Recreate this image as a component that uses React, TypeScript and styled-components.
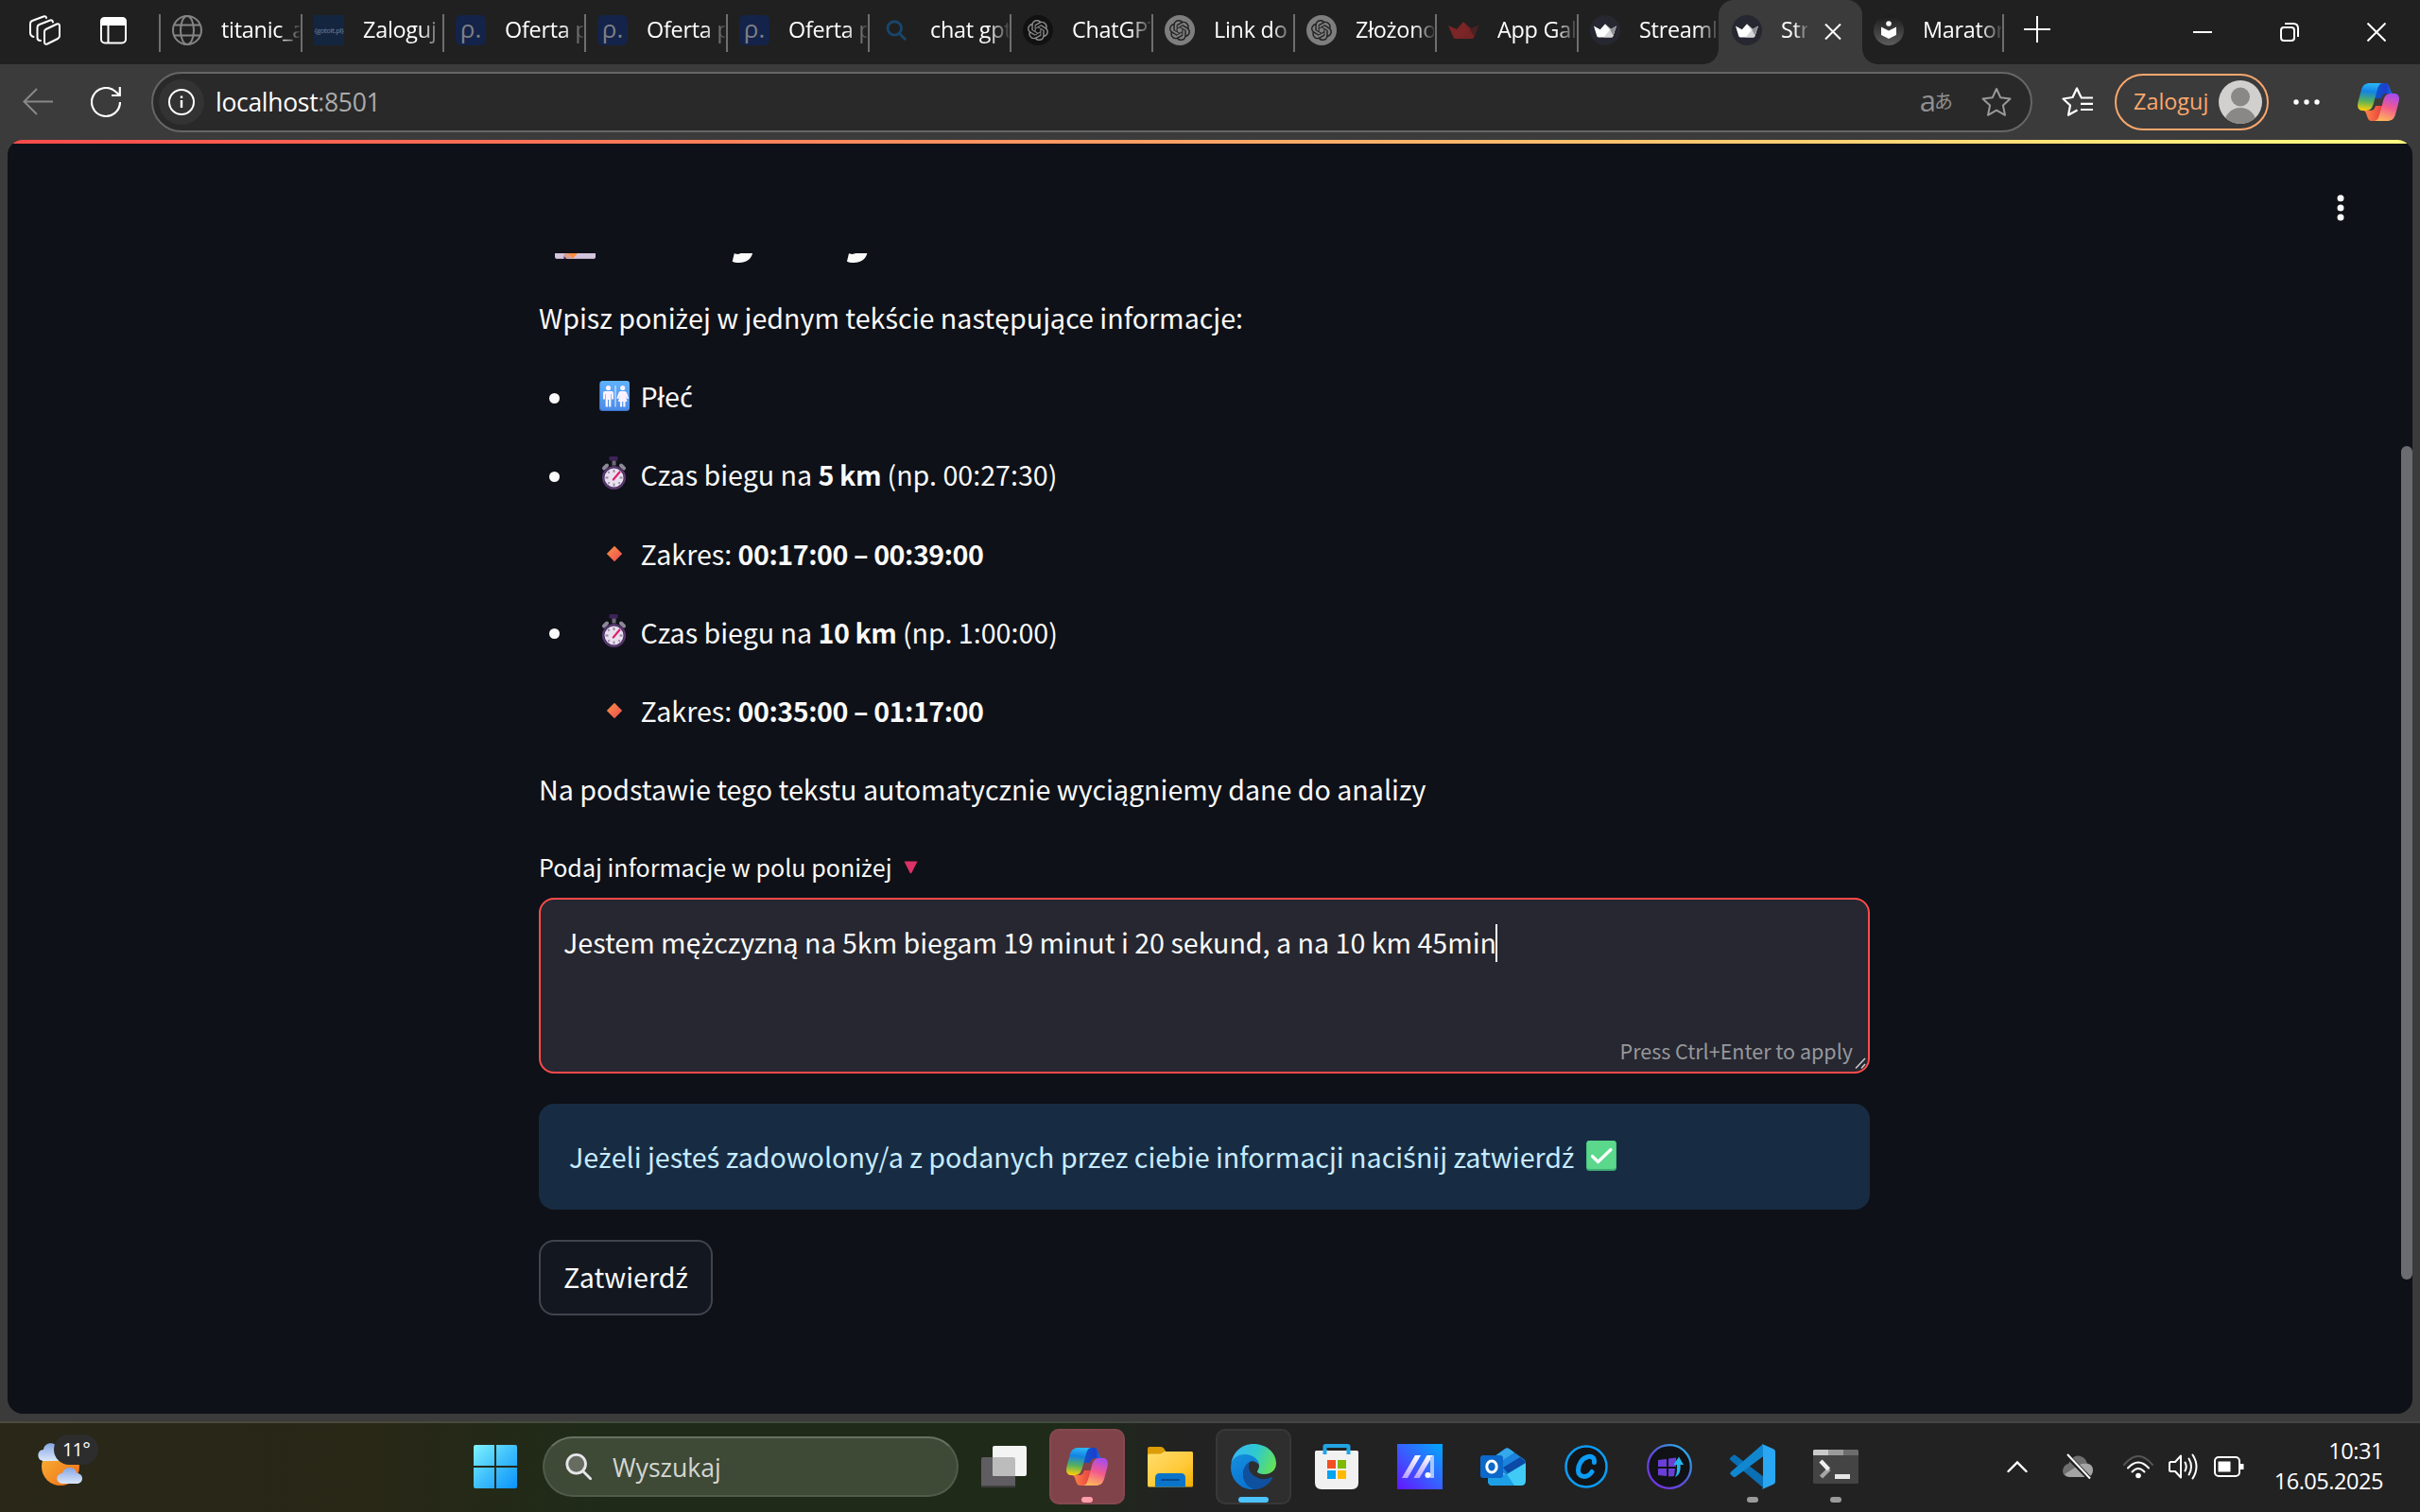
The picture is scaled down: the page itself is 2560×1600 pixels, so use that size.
import React from "react";
import styled, { createGlobalStyle, css } from "styled-components";
import { SiOpenai } from "react-icons/si";

const UI = '"Open Sans", "Noto Sans", "Noto Sans CJK JP", sans-serif';
const BODY = '"Noto Sans CJK SC", "Noto Sans", sans-serif';

const Global = createGlobalStyle`
  * { box-sizing: border-box; }
  html, body { margin: 0; padding: 0; background: #3b3b3b; }
  svg { display: block; flex: none; }
`;

const Screen = styled.div`
  display: flex;
  flex-direction: column;
  width: 2560px;
  height: 1600px;
  overflow: hidden;
  background: #3b3b3b;
  font-family: ${UI};
  color: #fff;
`;

/* ---------- tab strip ---------- */

const TabStrip = styled.header`
  display: flex;
  height: 68px;
  background: #202020;
`;

const StripTools = styled.div`
  display: flex;
  align-items: center;
  gap: 42px;
  width: 168px;
  height: 64px;
  padding-left: 31px;
`;

const Tab = styled.div<{ $active?: boolean; $divider?: boolean }>`
  position: relative;
  display: flex;
  align-items: flex-start;
  gap: 20px;
  width: 150px;
  height: 68px;
  padding: 16px 0 0 14px;
  ${(p) =>
    p.$active &&
    css`
      width: 152px;
      margin-right: -2px;
      border-radius: 16px 16px 0 0;
      background: #3b3b3b;
      &::before, &::after {
        content: "";
        position: absolute;
        bottom: 0;
        width: 16px;
        height: 16px;
      }
      &::before { left: -16px; background: radial-gradient(circle at 0 0, transparent 15.5px, #3b3b3b 16px); }
      &::after { right: -16px; background: radial-gradient(circle at 100% 0, transparent 15.5px, #3b3b3b 16px); }
    `}
  ${(p) =>
    p.$divider &&
    css`
      background: linear-gradient(#6e6e6e, #6e6e6e) 0 15px / 2px 40px no-repeat;
    `}
`;

const TabTitle = styled.span<{ $w: number; $fade: number }>`
  width: ${(p) => p.$w}px;
  height: 38px;
  margin-top: -4px;
  overflow: hidden;
  white-space: nowrap;
  font-size: 23.4px;
  line-height: 38px;
  letter-spacing: -0.25px;
  mask-image: linear-gradient(90deg, #000 ${(p) => p.$w - p.$fade}px, transparent ${(p) => p.$w + 3}px);
`;

const CloseIcon = styled.svg`
  margin: 9px 0 0 -2px;
`;

const Favicon = styled.div<{ $bg?: string; $round?: string; $fg?: string }>`
  display: flex;
  align-items: center;
  justify-content: center;
  flex: none;
  width: 32px;
  height: 32px;
  border-radius: ${(p) => p.$round ?? "0"};
  background: ${(p) => p.$bg ?? "transparent"};
  color: ${(p) => p.$fg ?? "#fff"};
`;

const RhoLetter = styled.span`
  font: 26px/28px ${UI};
  padding-bottom: 5px;
`;

const TinyLogo = styled.span`
  font: 600 7.6px/10px ${UI};
  letter-spacing: -0.5px;
`;

const StripEnd = styled.div`
  display: flex;
  flex: 1;
  background: linear-gradient(#6e6e6e, #6e6e6e) 0 15px / 2px 40px no-repeat;
`;

const NewTab = styled.div`
  padding: 17px 0 0 22px;
  flex: 1;
`;

const WindowButtons = styled.div`
  display: flex;
  gap: 72px;
  padding: 24px 36px 0 0;
`;

/* ---------- toolbar ---------- */

const Toolbar = styled.div`
  display: flex;
  align-items: center;
  height: 80px;
  padding-left: 24px;
`;

const NavButtons = styled.div`
  display: flex;
  gap: 40px;
  width: 136px;
`;

const AddressBar = styled.div`
  display: flex;
  align-items: center;
  width: 1990px;
  height: 64px;
  padding: 0 20px 0 6px;
  border: 2px solid #666;
  border-radius: 32px;
  background: #292929;
`;

const InfoBadge = styled.div`
  display: flex;
  align-items: center;
  justify-content: center;
  width: 48px;
  height: 48px;
  border-radius: 50%;
  background: #333;
`;

const Url = styled.div`
  flex: 1;
  padding-left: 12px;
  font-size: 26.5px;
  line-height: 36px;
  letter-spacing: -0.3px;
  span { color: #ababab; }
`;

const Translate = styled.span`
  display: flex;
  align-items: center;
  margin-right: 30px;
  color: #8f8f8f;
  font-size: 31px;
  line-height: 40px;
  padding-bottom: 4px;
  small { margin-left: -2px; padding-top: 1px; font-size: 20px; line-height: 40px; font-family: "Noto Sans CJK JP", sans-serif; }
`;

const SideTools = styled.div`
  display: flex;
  align-items: center;
  padding-left: 31px;
`;

const SignIn = styled.div`
  display: flex;
  align-items: center;
  justify-content: space-between;
  width: 163px;
  height: 60px;
  margin: 0 26px 0 23px;
  padding: 0 5px 0 18px;
  border: 2px solid #f9a86e;
  border-radius: 30px;
  color: #f9a86e;
  font-size: 23.4px;
  span { padding-bottom: 2px; }
`;

const Spacer = styled.div<{ $w: number }>`
  flex: none;
  width: ${(p) => p.$w}px;
`;

/* ---------- page ---------- */

const PageFrame = styled.div`
  display: flex;
  height: 1356px;
  padding: 0 8px 8px;
`;

const Page = styled.main`
  position: relative;
  display: flex;
  flex-direction: column;
  flex: 1;
  overflow: hidden;
  border-radius: 16px;
  background: #0e1117;
  color: #fafafa;
  font-family: ${BODY};
`;

const Decoration = styled.div`
  flex: none;
  height: 4px;
  background: linear-gradient(90deg, #ff4b4b, #fffd80);
`;

const PageHeader = styled.div`
  display: flex;
  flex: none;
  justify-content: flex-end;
  height: 116px;
  padding: 52px 72px 0 0;
`;

const ScrollArea = styled.div`
  flex: 1;
  overflow: hidden;
  padding-left: 562px;
`;

const ScrollThumb = styled.div`
  position: absolute;
  top: 324px;
  right: 0;
  width: 12px;
  height: 882px;
  border-radius: 6px;
  background: #6b6c70;
`;

const Column = styled.div`
  display: flex;
  flex-direction: column;
  width: 1408px;
`;

const Title = styled.h1`
  display: flex;
  align-items: flex-end;
  height: 42px;
  margin: 0;
  padding: 0 0 36px 17px;
  font-size: 78.8px;
  line-height: 110px;
`;

const TitleGlyph = styled.span<{ $gap: number }>`
  margin-left: ${(p) => p.$gap}px;
  margin-bottom: -7px;
`;

const Row = styled.div`
  display: flex;
  align-items: center;
  height: 51.2px;
  margin-bottom: 32px;
  font-size: 28.64px;
  line-height: 51.2px;
  white-space: pre;
  b { letter-spacing: -0.45px; }
`;

const Bullet = styled.span<{ $hidden?: boolean }>`
  width: 11px;
  height: 11px;
  margin: 5px 42px 0 11px;
  border-radius: 50%;
  background: ${(p) => (p.$hidden ? "transparent" : "#fafafa")};
`;

const EmojiSlot = styled.span`
  display: flex;
  justify-content: center;
  width: 32px;
  margin: 1px 12px 0 -0.5px;
`;

const Label = styled.label`
  display: flex;
  align-items: center;
  gap: 12px;
  height: 40px;
  margin: 5px 0 13px;
  font-size: 25.06px;
  line-height: 40px;
  svg { margin-top: 2px; }
`;

const TextField = styled.div`
  position: relative;
  display: flex;
  align-items: flex-start;
  height: 186px;
  padding: 19px 24px;
  border: 2px solid #ff4b4b;
  border-radius: 16px;
  background: #262730;
  font-size: 28.64px;
  line-height: 51.2px;
`;

const Caret = styled.span`
  width: 2px;
  height: 40px;
  margin: 7px 0 0 -1px;
  background: #fff;
`;

const FieldHint = styled.span`
  position: absolute;
  right: 16px;
  bottom: 4px;
  color: #97989d;
  font-size: 21.5px;
  line-height: 36px;
`;

const ResizeGrip = styled.svg`
  position: absolute;
  right: 1px;
  bottom: 2px;
`;

const Alert = styled.div`
  display: flex;
  align-items: center;
  gap: 12px;
  height: 112px;
  margin-top: 32px;
  padding: 0 32px 2px;
  border-radius: 16px;
  background: #172c43;
  color: #c7ebff;
  font-size: 28.64px;
`;

const Submit = styled.button`
  width: 184px;
  height: 80px;
  margin-top: 32px;
  padding: 0 0 2px;
  border: 2px solid #41444c;
  border-radius: 16px;
  background: #131720;
  color: #fafafa;
  font: 28.64px/48px ${BODY};
`;

const Accent = styled.span`
  font-family: "Noto Sans", sans-serif;
`;

/** Polish letters with marks above that the body face lacks are set in the fallback face. */
function Pl({ children }: { children: string }) {
  return (
    <span>
      {children.split(/([żźśćńŻŹŚĆŃ]+)/).map((part, i) => (i % 2 ? <Accent key={i}>{part}</Accent> : part))}
    </span>
  );
}

/* ---------- taskbar ---------- */

const Taskbar = styled.footer`
  display: flex;
  align-items: center;
  height: 96px;
  border-top: 2px solid rgba(255, 255, 255, 0.16);
  padding-bottom: 2px;
  background: linear-gradient(90deg, #2a2718 0, #282817 420px, #1f2b18 640px, #1f2b18 1120px, #222 1250px, #222 100%) border-box;
`;

const Weather = styled.div`
  position: relative;
  width: 64px;
  height: 76px;
  margin: 0 397px 0 40px;
`;

const Temperature = styled.span`
  position: absolute;
  top: 4px;
  left: 17px;
  width: 47px;
  height: 32px;
  border-radius: 16px;
  background: #2d2d2d;
  font-size: 20px;
  line-height: 32px;
  letter-spacing: -0.8px;
  text-align: center;
`;

const Search = styled.div`
  display: flex;
  align-items: center;
  gap: 21px;
  width: 440px;
  height: 64px;
  margin: 0 8px 0 27px;
  padding-left: 21px;
  border: 2px solid rgba(255, 255, 255, 0.1);
  border-top-color: rgba(255, 255, 255, 0.22);
  border-radius: 32px;
  background: #3e4936;
  color: #d3d6d1;
  font-size: 26.6px;
  line-height: 36px;
  span { padding-top: 2px; }
`;

const Apps = styled.div`
  display: flex;
  gap: 8px;
`;

const App_ = styled.div<{ $tile?: string; $edge?: string }>`
  position: relative;
  display: flex;
  align-items: center;
  justify-content: center;
  width: 80px;
  height: 80px;
  border: 2px solid ${(p) => p.$edge ?? "transparent"};
  border-radius: 10px;
  background: ${(p) => p.$tile ?? "transparent"};
`;

const Running = styled.i<{ $w: number; $c: string }>`
  position: absolute;
  bottom: 0;
  left: ${(p) => 38 - p.$w / 2}px;
  width: ${(p) => p.$w}px;
  height: 6px;
  border-radius: 3px;
  background: ${(p) => p.$c};
`;

const Tray = styled.div`
  display: flex;
  align-items: center;
  flex: 1;
  justify-content: flex-end;
  padding-right: 39px;
`;

const Clock = styled.div`
  width: 147px;
  padding-bottom: 2px;
  text-align: right;
  font-size: 23.6px;
  line-height: 32px;
  letter-spacing: -0.5px;
`;

/* ---------- drawings ---------- */

const Crown = ({ a, b, c }: { a: string; b: string; c: string }) => (
  <svg width="32" height="32" viewBox="0 0 32 32">
    <path d="M0 11l9 4 7-8 7 8 9-4-5 12.500q-.5 1.500-2 1.500H8q-2 0-2.500-1.500z" fill={a} />
    <path d="M16 7l7 8-9 10h11q1.500 0 2-1.500l2-5z" fill={b} />
    <path d="M32 11l-9 4 4 7z" fill={c} />
  </svg>
);

const CopilotLogo = ({ id }: { id: string }) => (
  <svg width="44" height="40" viewBox="0 0 44 40">
    <defs>
      <linearGradient id={id + "a"} x1=".4" y1="0" x2=".3" y2="1">
        <stop offset="0" stopColor="#2bb4f5" /><stop offset=".3" stopColor="#1284e4" />
        <stop offset=".65" stopColor="#57b05c" /><stop offset="1" stopColor="#fdd108" />
      </linearGradient>
      <linearGradient id={id + "b"} x1=".7" y1="0" x2=".4" y2="1">
        <stop offset="0" stopColor="#a64bf0" /><stop offset=".5" stopColor="#f25a8e" /><stop offset="1" stopColor="#ffb55b" />
      </linearGradient>
      <linearGradient id={id + "c"} x1="0" y1="0" x2="1" y2="0">
        <stop offset="0" stopColor="#0f56c8" /><stop offset=".6" stopColor="#1b3fd0" /><stop offset="1" stopColor="#2385ee" />
      </linearGradient>
      <linearGradient id={id + "d"} x1="0" y1="0" x2="1" y2="0">
        <stop offset="0" stopColor="#ff8e4a" /><stop offset="1" stopColor="#e8403f" />
      </linearGradient>
    </defs>
    <path d="M24 0h5c3 0 4 2 5 5l1 3c.7 2 1.500 3 4 3h-8c-4 0-5 2-6 5h-7l3-12z" fill={`url(#${id}c)`} />
    <path d="M20 40h-5c-3 0-4-2-5-5l-1-3c-.7-2-1.500-3-4-3h8c4 0 5-2 6-5h7l-3 12z" fill={`url(#${id}d)`} />
    <path d="M13 0h14c-4 0-5 3-6.500 8L17 21c-1.500 5-3 8-8 8H6c-6 0-7-4-5-11L4 7c1.500-5 4-7 9-7z" fill={`url(#${id}a)`} />
    <path d="M31 40H17c4 0 5-3 6.500-8L27 19c1.500-5 3-8 8-8h3c6 0 7 4 5 11l-3 11c-1.500 5-4 7-9 7z" fill={`url(#${id}b)`} />
  </svg>
);

const Stopwatch = () => (
  <svg width="27" height="40" viewBox="0 0 27 40">
    <rect x="8.500" y="1" width="9" height="4.500" rx="1.200" fill="#3d2358" />
    <path d="M11.500 5.500h4v5h-4z" fill="#6e6a78" />
    <path d="M3 13.500l3-3M24 13.500l-3-3" stroke="#8e8a98" strokeWidth="4" strokeLinecap="round" />
    <circle cx="13.500" cy="23.500" r="12.600" fill="#43305f" />
    <circle cx="13.500" cy="23.500" r="11.600" fill="none" stroke="#6b3b77" strokeWidth="1" />
    <circle cx="13.500" cy="23.500" r="10" fill="#e9e0ef" />
    <path d="M13.500 15v3M13.500 29.500v3M4.500 23.500h3M19.500 23.500h3M7.200 17.200l1.500 1.500M18.300 28.300l1.500 1.500M7.200 29.800l1.500-1.500" stroke="#96889f" strokeWidth="1.800" />
    <path d="M12.800 25.500L19.500 17.500" stroke="#e0206a" strokeWidth="2.200" strokeLinecap="round" />
  </svg>
);

const Restroom = () => (
  <svg width="32" height="32" viewBox="0 0 32 32">
    <defs><linearGradient id="wc" x1="0" y1="0" x2="0" y2="1"><stop stopColor="#5fb2ff" /><stop offset="1" stopColor="#4a8be8" /></linearGradient></defs>
    <rect width="32" height="32" rx="3.500" fill="#3c74cf" />
    <rect x="1" width="31" height="31" rx="3.200" fill="url(#wc)" />
    <g fill="#fbf2ff">
      <circle cx="9.500" cy="7.500" r="2.600" /><circle cx="24.700" cy="7.500" r="2.600" />
      <path d="M6 11h7q2 0 2 2v6.500h-2V14h-.6v13.500h-2.300V20H9v7.500H6.600V14H6v5.500H4V13q0-2 2-2z" />
      <path d="M22 11h5.400l1.600 1.500 2 6-1.800.8-1.700-4 2 6.700h-2v5.500h-2.200V22h-1.200v5.500h-2.200V22h-2l2-6.700-1.700 4-1.800-.8 2-6z" />
    </g>
    <path d="M17 5v22.500" stroke="#fbf2ff" />
  </svg>
);

const Diamond = () => (
  <svg width="18" height="18" viewBox="0 0 18 18">
    <defs><linearGradient id="dm" x1="0" y1="0" x2="1" y2="1"><stop stopColor="#f99345" /><stop offset="1" stopColor="#ef4a52" /></linearGradient></defs>
    <path d="M9 .8L17.200 9 9 17.200.8 9z" fill="url(#dm)" />
  </svg>
);

const Triangle = () => (
  <svg width="15" height="14" viewBox="0 0 15 14">
    <path d="M.5.500h14L8.500 12.500q-1 1.500-2 0z" fill="#dc3265" />
  </svg>
);

const CheckMark = () => (
  <svg width="32" height="32" viewBox="0 0 32 32">
    <rect width="32" height="32" rx="3.500" fill="#3fae74" />
    <rect x=".5" width="31" height="30" rx="3" fill="#5bd88c" />
    <path d="M6.500 16.500l6 6L26 9.500" fill="none" stroke="#fff" strokeWidth="3.200" strokeLinecap="round" strokeLinejoin="round" />
  </svg>
);

const Memo = () => (
  <svg width="44" height="64" viewBox="0 0 44 64">
    <rect y="0" width="43" height="64" rx="2.500" fill="#d3c5dc" />
    <path d="M2 63.500h39" stroke="#b9aac4" strokeWidth="1" />
    <path d="M11 56h15L19 63.500z" fill="#ff8f3c" />
    <path d="M9 60l3-3 7 6.500h-7z" fill="#d9a08e" />
    <path d="M9.500 61l3 3h-3z" fill="#4a2a4c" />
  </svg>
);

const Magnifier = ({ size, color, width, fill = "none" }: { size: number; color: string; width: number; fill?: string }) => (
  <svg width={size} height={size} viewBox="0 0 32 32" fill="none" stroke={color} strokeWidth={width} strokeLinecap="round">
    <circle cx="13.500" cy="13" r="10.500" fill={fill} />
    <path d="M21 21l8.500 8.500" />
  </svg>
);

const EdgeLogo = () => (
  <svg width="48" height="48" viewBox="0 0 48 48">
    <defs>
      <linearGradient id="eg" x1="0" y1=".3" x2="1" y2=".6"><stop stopColor="#37b6f7" /><stop offset=".5" stopColor="#2fc9cf" /><stop offset="1" stopColor="#63e257" /></linearGradient>
      <linearGradient id="eb" x1="0" y1="0" x2=".5" y2="1"><stop stopColor="#1590de" /><stop offset="1" stopColor="#0873d2" /></linearGradient>
    </defs>
    <path d="M0 25C0 16 7 10 15 10c9 0 15 6 15 12-3-3.500-7-4.500-9-3.500C14 22 12 30 13.500 36c2 7 7.500 11.500 13.500 12C12 50 0 39 0 25z" fill="url(#eb)" />
    <path d="M21 18.500C14 22 12 30 13.500 36 15.500 43 21 48 27 48c8-1 14-6 17-11.500.5-1-.5-1.800-1.500-1.200-4 2-8 2.700-12.500 1.200-6-2-11-7-11-12 0-2.500.5-4.500 2-6z" fill="#0f519f" />
    <path d="M.3 21C2 8.500 12 0 24 0c14 0 24 9.500 24 20.500C48 28 42 32 36 32c-5 0-8-1.500-8-2.800S30 26.500 30 23c0-7-7-12-15-12C7 11 2 15.500.3 21z" fill="url(#eg)" />
  </svg>
);

const FolderLogo = () => (
  <svg width="48" height="43" viewBox="0 0 48 43">
    <defs><linearGradient id="fo" x1="0" y1="0" x2="1" y2="1"><stop stopColor="#ffdd6e" /><stop offset=".6" stopColor="#ffc937" /><stop offset="1" stopColor="#f2ae00" /></linearGradient></defs>
    <path d="M0 2q0-2 2-2h12q2 0 3 1.500L20 6v8H0z" fill="#dc9c05" />
    <path d="M0 9q0-1.500 1.500-1.500h12L18 5h28.500Q48 5 48 6.500V41q0 1.500-1.500 1.500h-45Q0 42.500 0 41z" fill="url(#fo)" />
    <path d="M8 42.500V33q0-5 5-5h22q5 0 5 5v9.500z" fill="#0a74ca" />
    <path d="M15 35h18" stroke="#0a4a8c" strokeWidth="2" strokeLinecap="round" />
  </svg>
);

const TaskViewLogo = () => (
  <svg width="48" height="44" viewBox="0 0 48 44">
    <rect x="0" y="12" width="36" height="32" rx="2" fill="#5f5d61" />
    <rect x="12" y="0" width="36" height="32" rx="2" fill="#f4f4f4" />
    <path d="M12 12h22q2 0 2 2v18H14q-2 0-2-2z" fill="#bcbcbc" />
    <path d="M0 42h36q0 2-2 2H2q-2 0-2-2z" fill="#3f3f3f" />
  </svg>
);

const StoreLogo = () => (
  <svg width="46" height="48" viewBox="0 0 46 48">
    <path d="M10.500 11V2.800Q10.500 2 11.300 2h23.400q.8 0 .8.800V11" fill="none" stroke="#22a4e4" strokeWidth="4" />
    <path d="M0 8.500Q0 7 1.500 7h43Q46 7 46 8.500V41q0 7-7 7H7q-7 0-7-7z" fill="#f1f1f1" />
    <path d="M10.500 6v5M35.500 6v5" stroke="#22a4e4" strokeWidth="4" />
    <path d="M13 17h9v9h-9z" fill="#f25022" /><path d="M24 17h9v9h-9z" fill="#7fba00" />
    <path d="M13 28h9v9h-9z" fill="#00a4ef" /><path d="M24 28h9v9h-9z" fill="#ffb900" />
  </svg>
);

const AsusLogo = () => (
  <svg width="48" height="48" viewBox="0 0 48 48">
    <defs>
      <linearGradient id="as" x1="0" y1="1" x2="1" y2="0"><stop stopColor="#6414ff" /><stop offset=".5" stopColor="#3760ff" /><stop offset="1" stopColor="#00a8ff" /></linearGradient>
      <linearGradient id="at" x1="0" y1="1" x2="0" y2="0"><stop stopColor="#b7a2ff" /><stop offset="1" stopColor="#fff" /></linearGradient>
    </defs>
    <path d="M0 0h48v48H0z" fill="url(#as)" />
    <path d="M5 36L19 12h6L11 36zM17.500 36l14-24H38L23.500 36z" fill="url(#at)" />
    <path d="M35 14l4-2v24h-4z" fill="#a8c6ff" />
    <circle cx="32.500" cy="33" r="3" fill="#fff" />
  </svg>
);

const OutlookLogo = () => (
  <svg width="48" height="40" viewBox="0 0 48 40">
    <path d="M8 14L26 1q2-1.500 4 0l16 11q2 1.500 2 4L30 28 8 24z" fill="#1c83dc" />
    <path d="M14 10L27 .8q1.500-.8 3 0L36 5 18 17z" fill="#35a9ec" />
    <path d="M24 21l18-11 4 3q2 1.500 2 4L30 28z" fill="#0b4aa6" />
    <path d="M8 20l20 8 20-12v19q0 5-5 5H13q-5 0-5-5z" fill="#3fcbf5" />
    <path d="M8 31l20-3 8 12H13q-5 0-5-5z" fill="#1d9fe8" />
    <rect y="8" width="24" height="24" rx="3" fill="#0c68c9" />
    <ellipse cx="12" cy="20" rx="5.200" ry="6" fill="none" stroke="#fff" strokeWidth="3" />
  </svg>
);

const CircleCLogo = () => (
  <svg width="46" height="46" viewBox="0 0 46 46" fill="none" stroke="#0c9cf5">
    <circle cx="23" cy="23" r="21.500" fill="#121417" strokeWidth="2.500" />
    <path d="M31.500 18.500C32 12.500 28 12 25 12.500 18 14 14.500 21 14.500 27c0 8 10 8.500 14.500 1.500" strokeWidth="5" strokeLinecap="round" />
  </svg>
);

const UpdateLogo = () => (
  <svg width="48" height="48" viewBox="0 0 48 48">
    <defs>
      <linearGradient id="up" x1="0" y1="1" x2="1" y2="0"><stop stopColor="#7b2bea" /><stop offset=".5" stopColor="#5a55d8" /><stop offset="1" stopColor="#1cc3ee" /></linearGradient>
    </defs>
    <circle cx="24" cy="24" r="22.800" fill="#111216" stroke="url(#up)" strokeWidth="2.200" />
    <path d="M12 17l9-1v8h-9zM23 15.500l8-1V24h-8zM12 26h9v8l-9-1zM23 26h7l-1 8-6 .5z" fill="#6a3fd8" />
    <path d="M30 35c5-2 6-7 5.500-13h3.500L34 13.500 28.500 22H32c0 6 0 10-2 13z" fill="#21b7ea" />
  </svg>
);

const CodeLogo = () => (
  <svg width="48" height="48" viewBox="0 0 48 48">
    <path d="M0 17.500q-.5-1.500 1-2.500l2.500-2q1-.8 2.500 0L36 36v12L1 18.500z" fill="#0a6fb4" transform="translate(0 -1)" />
    <path d="M35 0L1 29.500Q-.5 31 1 32.500l2.500 2.300q1 .8 2.500 0L36 12.500z" fill="#1187cf" />
    <path d="M34 0l12 5.300q2 1 2 3v31.400q0 2-2 3L34 48q1-1 1-3V3q0-2-1-3z" fill="#2aa7f2" />
  </svg>
);

const TerminalLogo = () => (
  <svg width="48" height="36" viewBox="0 0 48 36">
    <rect width="48" height="36" rx="1.500" fill="#444" />
    <path d="M1.500 0H16v6H0V1.500Q0 0 1.500 0z" fill="#cacaca" />
    <path d="M16 0h16v6H16z" fill="#9b9b9b" /><path d="M32 0h14.500Q48 0 48 1.500V6H32z" fill="#6c6c6c" />
    <path d="M8.500 29L17 20.500" stroke="#a5a5a5" strokeWidth="4.500" />
    <path d="M8 12l8.500 9" stroke="#efefef" strokeWidth="4.500" />
    <path d="M23 26h16v5H23z" fill="#e6e6e6" />
  </svg>
);

const WeatherArt = () => (
  <svg width="50" height="76" viewBox="0 0 50 76">
    <defs>
      <linearGradient id="su" x1="0" y1="0" x2="1" y2="1"><stop stopColor="#f6b93a" /><stop offset="1" stopColor="#f26a14" /></linearGradient>
      <linearGradient id="cl" x1="0" y1="0" x2="0" y2="1"><stop stopColor="#86a6e4" /><stop offset="1" stopColor="#dbe7fb" /></linearGradient>
    </defs>
    <circle cx="24" cy="38" r="20" fill="url(#su)" />
    <path d="M6 32c-8-1-7-12 0-12 1-9 14-9 16 0 7 1 7 12 0 12z" fill="url(#cl)" />
    <path d="M26 56c-8-1-7-11 0-11 2-8 14-8 15 0 8 0 8 11 0 11z" fill="url(#cl)" />
  </svg>
);

const Star = ({ color }: { color: string }) => (
  <svg width="32" height="32" viewBox="0 0 32 32" fill="none" stroke={color} strokeWidth="2" strokeLinejoin="round">
    <path d="M16 2l4.300 9.300 10.200 1.200-7.600 6.900 2.100 10.400L16 24.700l-9 5.100 2.100-10.400-7.600-6.900 10.200-1.200z" />
  </svg>
);

/* ---------- data ---------- */

const rho = <Favicon $bg="#14234a" $round="6px" $fg="#7e8086"><RhoLetter>ρ.</RhoLetter></Favicon>;
const gpt = (bg: string, fg: string) => <Favicon $bg={bg} $round="50%" $fg={fg}><SiOpenai size={22} /></Favicon>;
const streamlit = <Favicon $bg="#262730" $round="50%"><svg width="24" height="24" viewBox="0 0 32 32">
  <path d="M0 10l9 5 7-8 7 8 9-5-5 14.500q-.5 1.500-2 1.500H7q-2 0-2.500-1.500z" fill="#fff" />
  <path d="M16 7l7 8-9 11h11q1.500 0 2-1.500l2-6z" fill="#d6d6d8" />
  <path d="M32 10l-9 5 4 8z" fill="#8c8d92" />
</svg></Favicon>;

const tabs: { title: string; icon: React.ReactNode; active?: boolean; divider?: boolean }[] = [
  {
    title: "titanic_a",
    divider: true,
    icon: (
      <svg width="32" height="32" viewBox="0 0 32 32" fill="none" stroke="#858585" strokeWidth="2">
        <circle cx="16" cy="16" r="15" /><ellipse cx="16" cy="16" rx="7" ry="15" /><path d="M2.500 10.500h27M2.500 21.500h27" />
      </svg>
    ),
  },
  { title: "Zaloguj", divider: true, icon: <Favicon $bg="#14253f" $fg="#5d6c84"><TinyLogo>{"{gotoit.pl}"}</TinyLogo></Favicon> },
  { title: "Oferta p", divider: true, icon: rho },
  { title: "Oferta p", divider: true, icon: rho },
  { title: "Oferta p", divider: true, icon: rho },
  { title: "chat gpt", divider: true, icon: <Favicon><Magnifier size={22} color="#19456b" width={4.2} /></Favicon> },
  { title: "ChatGPT", divider: true, icon: gpt("#111", "#8a8a8a") },
  { title: "Link do", divider: true, icon: gpt("#7e7e7e", "#222") },
  { title: "Złożono", divider: true, icon: gpt("#7e7e7e", "#222") },
  { title: "App Gal", divider: true, icon: <Crown a="#7b2527" b="#752325" c="#4a2122" /> },
  { title: "Streamli", divider: true, icon: streamlit },
  { title: "Str", active: true, icon: streamlit },
  {
    title: "Marator",
    icon: (
      <Favicon $bg="linear-gradient(#1b1b1b,#5c5c5c)" $round="50%">
        <svg width="32" height="32" viewBox="0 0 32 32" fill="#fff">
          <circle cx="16" cy="9" r="2.800" /><path d="M8 12.500l8 4 8-4v8.500L16 25l-8-4z" />
        </svg>
      </Favicon>
    ),
  },
];

export default function App() {
  return (
    <Screen>
      <Global />
      <TabStrip>
        <StripTools>
          <svg width="33" height="32" viewBox="0 0 33 32" fill="none" stroke="#fff" strokeWidth="2" strokeLinejoin="round" strokeLinecap="round">
            <path d="M17.500 15l11.500-5.500q3-1 3 2V22q0 2-2 3l-11 5.500q-3 1-3-2V17.500q0-1.700 1.500-2.500z" />
            <path d="M12 27q-3.500 0-3.500-3V13q0-2 2-3L22 5.500q2.500-.8 3 2M4.500 23Q1 22 1 19V9q0-2 2-3l12-4.500q2.500-.8 3 1.500" />
          </svg>
          <svg width="28" height="29" viewBox="0 0 28 29" fill="none" stroke="#fff" strokeWidth="2">
            <rect x="1" y="1.500" width="26" height="26" rx="4" /><path d="M1 8V5q0-4 4-4h18q4 0 4 4v3z" fill="#fff" /><path d="M8.500 8v19" />
          </svg>
        </StripTools>
        {tabs.map((t, i) => (
          <Tab key={i} $active={t.active} $divider={t.divider}>
            {t.icon}
            <TabTitle $w={t.active ? 28 : 83} $fade={t.active ? 14 : 22}>{t.title}</TabTitle>
            {t.active && (
              <CloseIcon width="18" height="17" viewBox="0 0 18 17" stroke="#fff" strokeWidth="2">
                <path d="M1 .5l16 16M17 .5l-16 16" />
              </CloseIcon>
            )}
          </Tab>
        ))}
        <StripEnd>
          <NewTab>
            <svg width="30" height="28" viewBox="0 0 30 28" stroke="#fff" strokeWidth="2"><path d="M1 14h28M15 0v28" /></svg>
          </NewTab>
          <WindowButtons>
            <svg width="20" height="20" viewBox="0 0 20 20" stroke="#fff" strokeWidth="2"><path d="M0 10h20" /></svg>
            <svg width="20" height="20" viewBox="0 0 20 20" fill="none" stroke="#fff" strokeWidth="2">
              <rect x="1" y="5" width="14" height="14" rx="3" /><path d="M5 1h9q5 0 5 5v9" />
            </svg>
            <svg width="20" height="20" viewBox="0 0 20 20" stroke="#fff" strokeWidth="2"><path d="M.5.500l19 19M19.500.500l-19 19" /></svg>
          </WindowButtons>
        </StripEnd>
      </TabStrip>

      <Toolbar>
        <NavButtons>
          <svg width="32" height="32" viewBox="0 0 32 32" fill="none" stroke="#888" strokeWidth="2"><path d="M15 2L1.500 15.500 15 29M1.500 15.500H32" /></svg>
          <svg width="32" height="32" viewBox="0 0 32 32" fill="none" stroke="#fff" strokeWidth="2.200"><path d="M31 16a15 15 0 1 1-5-11.200l4.500 4M30.800 0v9H22" /></svg>
        </NavButtons>
        <AddressBar>
          <InfoBadge>
            <svg width="30" height="30" viewBox="0 0 30 30" fill="none" stroke="#fff" strokeWidth="2"><circle cx="15" cy="15" r="13" /><path d="M15 13v8M15 8.500v2.500" strokeWidth="2.400" /></svg>
          </InfoBadge>
          <Url>localhost<span>:8501</span></Url>
          <Translate>a<small>あ</small></Translate>
          <Star color="#999" />
        </AddressBar>
        <SideTools>
          <svg width="33" height="32" viewBox="0 0 33 32" fill="none" stroke="#fff" strokeWidth="2.200" strokeLinejoin="round">
            <path d="M20.500 11L16 1.500 11.500 11 1.500 12.500l7.500 7L7 29.800l9.500-5.300M20 11.500h13M20 17.800h13M20 24h13" />
          </svg>
          <SignIn>
            <span>Zaloguj</span>
            <svg width="46" height="46" viewBox="0 0 46 46">
              <defs><clipPath id="av"><circle cx="23" cy="23" r="23" /></clipPath></defs>
              <g clipPath="url(#av)">
                <path d="M0 0h46v46H0z" fill="#d2d0ce" /><circle cx="23" cy="17.500" r="10" fill="#8a8886" /><circle cx="23" cy="46" r="17" fill="#8a8886" />
              </g>
            </svg>
          </SignIn>
          <svg width="28" height="8" viewBox="0 0 28 8" fill="#fff"><circle cx="3" cy="4" r="2.700" /><circle cx="14" cy="4" r="2.700" /><circle cx="25" cy="4" r="2.700" /></svg>
          <Spacer $w={40} />
          <CopilotLogo id="ca" />
        </SideTools>
      </Toolbar>

      <PageFrame>
        <Page>
          <Decoration />
          <PageHeader>
            <svg width="8" height="32" viewBox="0 0 8 32" fill="#fafafa"><circle cx="4" cy="5.800" r="3.500" /><circle cx="4" cy="15.900" r="3.500" /><circle cx="4" cy="26" r="3.500" /></svg>
          </PageHeader>
          <ScrollArea>
            <Column>
              <Title>
                <Memo />
                <TitleGlyph $gap={148}>j</TitleGlyph>
                <TitleGlyph $gap={97}>j</TitleGlyph>
              </Title>
              <Row><Pl>Wpisz poniżej w jednym tekście następujące informacje:</Pl></Row>
              <Row><Bullet /><EmojiSlot><Restroom /></EmojiSlot><Pl>Płeć</Pl></Row>
              <Row><Bullet /><EmojiSlot><Stopwatch /></EmojiSlot>Czas biegu na <b>5 km</b> (np. 00:27:30)</Row>
              <Row><Bullet $hidden /><EmojiSlot><Diamond /></EmojiSlot>Zakres: <b>00:17:00 – 00:39:00</b></Row>
              <Row><Bullet /><EmojiSlot><Stopwatch /></EmojiSlot>Czas biegu na <b>10 km</b> (np. 1:00:00)</Row>
              <Row><Bullet $hidden /><EmojiSlot><Diamond /></EmojiSlot>Zakres: <b>00:35:00 – 01:17:00</b></Row>
              <Row><Pl>Na podstawie tego tekstu automatycznie wyciągniemy dane do analizy</Pl></Row>
              <Label><Pl>Podaj informacje w polu poniżej</Pl><Triangle /></Label>
              <TextField>
                <Pl>Jestem mężczyzną na 5km biegam 19 minut i 20 sekund, a na 10 km 45min</Pl>
                <Caret />
                <FieldHint>Press Ctrl+Enter to apply</FieldHint>
                <ResizeGrip width="14" height="14" viewBox="0 0 14 14" stroke="#c9c9cc" strokeWidth="1.600">
                  <path d="M2 12.500L12 2M8 12.500l4-4.500" />
                </ResizeGrip>
              </TextField>
              <Alert><Pl>Jeżeli jesteś zadowolony/a z podanych przez ciebie informacji naciśnij zatwierdź</Pl><CheckMark /></Alert>
              <Submit><Pl>Zatwierdź</Pl></Submit>
            </Column>
          </ScrollArea>
          <ScrollThumb />
        </Page>
      </PageFrame>

      <Taskbar>
        <Weather><WeatherArt /><Temperature>11°</Temperature></Weather>
        <svg width="46" height="46" viewBox="0 0 46 46">
          <defs><linearGradient id="wi" x1="0" y1="0" x2="46" y2="46" gradientUnits="userSpaceOnUse"><stop stopColor="#7ff3ff" /><stop offset=".5" stopColor="#3fc0fb" /><stop offset="1" stopColor="#0a92fb" /></linearGradient></defs>
          <path d="M2 0h20v22H0V2q0-2 2-2zM24 0h20q2 0 2 2v20H24zM0 24h22v22H2q-2 0-2-2zM24 24h22v20q0 2-2 2H24z" fill="url(#wi)" />
        </svg>
        <Search><Magnifier size={30} color="#e6e6ea" width={3} fill="#666d60" /><span>Wyszukaj</span></Search>
        <Apps>
          <App_><TaskViewLogo /></App_>
          <App_ $tile="#80434a" $edge="#86484f"><CopilotLogo id="cb" /><Running $w={12} $c="#ff9da8" /></App_>
          <App_><FolderLogo /></App_>
          <App_ $tile="#2e2e2e" $edge="#383838"><EdgeLogo /><Running $w={32} $c="#4cc2ff" /></App_>
          <App_><StoreLogo /></App_>
          <App_><AsusLogo /></App_>
          <App_><OutlookLogo /></App_>
          <App_><CircleCLogo /></App_>
          <App_><UpdateLogo /></App_>
          <App_><CodeLogo /><Running $w={12} $c="#9a9a9a" /></App_>
          <App_><TerminalLogo /><Running $w={12} $c="#9a9a9a" /></App_>
        </Apps>
        <Tray>
          <svg width="22" height="14" viewBox="0 0 22 14" fill="none" stroke="#fff" strokeWidth="2.400" strokeLinecap="round"><path d="M1.500 12L11 2.500 20.500 12" /></svg>
          <Spacer $w={37} />
          <svg width="32" height="28" viewBox="0 0 32 28">
            <path d="M7 25Q0 25 0 18q1-6 6-7Q10 2 17 2.500q7 1 9 8 6 1 6 8-1 6.500-6 6.500z" fill="#6f6f6f" />
            <path d="M2 22l11-7 7-4q12-2 12 7-1 7-6 7H7q-3 0-5-3z" fill="#a4a4a4" />
            <path d="M3.500 1l25 25.500" stroke="#222" strokeWidth="5" /><path d="M5 1l24 25.500" stroke="#fff" strokeWidth="2" />
          </svg>
          <Spacer $w={32} />
          <svg width="32" height="26" viewBox="0 0 32 26" fill="none" stroke="#fff" strokeWidth="2" strokeLinecap="round">
            <path d="M1 11q15-18 30 0" stroke="#555" /><path d="M5 14.500q11-12 22 0M9.500 18.500q6.500-7 13 0" /><circle cx="16" cy="22.500" r="2.800" fill="#fff" stroke="none" />
          </svg>
          <Spacer $w={16} />
          <svg width="33" height="30" viewBox="0 0 33 30" fill="none" stroke="#fff" strokeWidth="2" strokeLinecap="round" strokeLinejoin="round">
            <path d="M1 11.500q0-1.500 1.500-1.500H7l6-6.500v23L7 20H2.500Q1 20 1 18.500zM17.500 10.500q2.500 4.500 0 9M21.500 6.500q5 8.500 0 17M25.500 2.500q8 12.500 0 25" />
          </svg>
          <Spacer $w={15} />
          <svg width="32" height="22" viewBox="0 0 32 22" fill="none" stroke="#fff" strokeWidth="2">
            <rect x="1" y="1" width="26" height="20" rx="4" /><path d="M4.500 5.500h13v11h-13z" fill="#fff" stroke="none" /><path d="M28 8h3.500v6H28z" fill="#fff" stroke="none" />
          </svg>
          <Clock>10:31<br />16.05.2025</Clock>
        </Tray>
      </Taskbar>
    </Screen>
  );
}
